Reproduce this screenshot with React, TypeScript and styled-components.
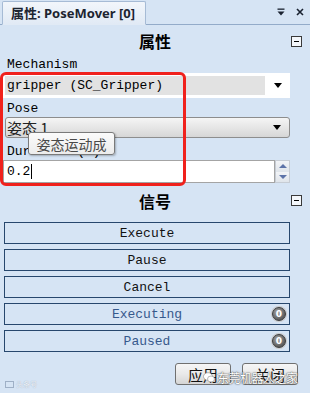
import React from 'react'
import styled, { createGlobalStyle } from 'styled-components'

const GlobalStyle = createGlobalStyle`
    html, body {
        margin: 0;
        padding: 0;
        background: #d6e4f4;
    }
    body {
        font-family: "Liberation Mono", "Noto Sans CJK SC", monospace;
    }
`

const Page = styled.div`
    position: relative;
    width: 310px;
    height: 393px;
    overflow: hidden;
    background: #d6e4f4;
`

const TabStrip = styled.div`
    display: flex;
    align-items: flex-end;
    justify-content: space-between;
    height: 24px;
    border-bottom: 1px solid #93abc9;
    padding-left: 2px;
`

const Tab = styled.div`
    display: flex;
    align-items: center;
    height: 21px;
    width: 134px;
    margin-bottom: -1px;
    padding: 0 0 1px 8px;
    background: linear-gradient(#f2f6fb, #e1eaf5);
    border: 1px solid #a6bbd5;
    border-bottom: 1px solid #e1eaf5;
    border-radius: 2px 2px 0 0;
    font-family: "Noto Sans", "Noto Sans CJK SC", sans-serif;
    font-weight: bold;
    font-size: 13px;
    color: #1c2430;
    white-space: nowrap;
`

const StripTools = styled.div`
    display: flex;
    align-items: center;
    gap: 11px;
    height: 24px;
    padding-right: 6px;
`

const Body = styled.div`
    padding: 0 20px 0 4px;
`

const SectionHead = styled.div<{ $h: number }>`
    display: grid;
    grid-template-columns: 1fr auto 1fr;
    align-items: center;
    height: ${({ $h }) => $h}px;
    margin: 0 -20px 0 -4px;
    font-family: "Noto Sans CJK SC", sans-serif;
    font-weight: bold;
    font-size: 16px;
    color: #000;
    span {
        grid-column: 2;
    }
`

const Collapse = styled.div`
    grid-column: 3;
    justify-self: end;
    margin-right: 8px;
    width: 9px;
    height: 9px;
    border: 1px solid #3a3a3a;
    background: #f4f7fb;
    position: relative;
    &:after {
        content: '';
        position: absolute;
        left: 2px;
        right: 2px;
        top: 4px;
        height: 1px;
        background: #000;
    }
`

const Group = styled.div`
    position: relative;
`

const Label = styled.div<{ $top?: number }>`
    height: 16px;
    line-height: 16px;
    margin-top: ${({ $top }) => $top || 0}px;
    padding-left: 3px;
    font-size: 13px;
    color: #000;
    white-space: nowrap;
`

const Combo = styled.div`
    display: flex;
    align-items: center;
    height: 25px;
    margin-left: -1px;
    background: #fff;
    box-sizing: border-box;
    padding: 3px 0 3px 2px;
`

const ComboValue = styled.div`
    flex: 1;
    height: 100%;
    display: flex;
    align-items: center;
    padding-left: 2px;
    background: #e2e2e2;
    font-size: 13px;
    color: #000;
`

const Arrow = styled.div`
    width: 25px;
    display: flex;
    justify-content: center;
    align-items: center;
    &:before {
        content: '';
        border-left: 4.5px solid transparent;
        border-right: 4.5px solid transparent;
        border-top: 5px solid #000;
    }
`

const Select = styled.div`
    display: flex;
    align-items: center;
    height: 21px;
    margin-left: 1px;
    box-sizing: border-box;
    border: 1px solid #8d8d8d;
    border-radius: 3px;
    background: linear-gradient(#f5f5f5, #e6e6e6 50%, #d6d6d6);
`

const SelectValue = styled.div`
    flex: 1;
    padding-left: 1px;
    font-family: "Noto Sans CJK SC", sans-serif;
    font-size: 15px;
    line-height: 19px;
    color: #222;
    white-space: nowrap;
`

const Tip = styled.div`
    position: absolute;
    left: 24px;
    top: 75px;
    height: 23px;
    width: 87px;
    box-sizing: border-box;
    display: flex;
    align-items: center;
    justify-content: center;
    border: 1px solid #7a7a7a;
    border-radius: 3px;
    background: linear-gradient(#fbfbfb, #ececec);
    box-shadow: 1px 1px 2px rgba(0, 0, 0, 0.25);
    font-family: "Noto Sans CJK SC", sans-serif;
    font-size: 14px;
    color: #4a4a4a;
    z-index: 2;
`

const SpinRow = styled.div`
    display: flex;
    height: 23px;
    margin-left: -1px;
`

const SpinInput = styled.div`
    flex: 1;
    display: flex;
    align-items: center;
    padding-left: 3px;
    background: #fff;
    border: 1px solid #a4a4a4;
    box-sizing: border-box;
    font-size: 13px;
    color: #000;
`

const Caret = styled.span`
    display: inline-block;
    width: 1px;
    height: 15px;
    margin-left: 1px;
    background: #000;
`

const SpinButtons = styled.div`
    display: flex;
    flex-direction: column;
    width: 15px;
    border: 1px solid #c6ccd4;
    box-sizing: border-box;
    background: #e4e9ef;
`

const SpinBtn = styled.div<{ $up?: boolean }>`
    flex: 1;
    display: flex;
    align-items: center;
    justify-content: center;
    background: linear-gradient(#f2f4f7, #dfe4ea);
    &:before {
        content: '';
        border-left: 4px solid transparent;
        border-right: 4px solid transparent;
        ${({ $up }) => $up ? 'border-bottom: 4px solid #5d73a8;' : 'border-top: 4px solid #5d73a8;'}
    }
`

const Annotation = styled.div`
    position: absolute;
    left: -4px;
    top: 15px;
    width: 186px;
    height: 114px;
    box-sizing: border-box;
    border: 3px solid #f0211c;
    border-radius: 6px;
    pointer-events: none;
    z-index: 3;
`

const SignalList = styled.div`
    display: flex;
    flex-direction: column;
    gap: 5px;
    margin-top: 4px;
`

const SignalButton = styled.div<{ $state?: boolean }>`
    position: relative;
    height: 22px;
    box-sizing: border-box;
    border: 1px solid #27476d;
    display: flex;
    align-items: center;
    justify-content: center;
    font-size: 13px;
    color: ${({ $state }) => $state ? '#36598c' : '#111'};
`

const Badge = styled.div`
    position: absolute;
    right: 3px;
    top: 3px;
    width: 14px;
    height: 14px;
    box-sizing: border-box;
    border-radius: 50%;
    border: 1px solid #3b3b3b;
    background: radial-gradient(circle at 40% 35%, #a8a8a8, #5d5d5d 70%);
    display: flex;
    align-items: center;
    justify-content: center;
    font-family: "DejaVu Sans", sans-serif;
    font-weight: bold;
    font-size: 9px;
    color: #fff;
    box-shadow: 0 0 0 1px #c9c9c9;
`

const Footer = styled.div`
    display: flex;
    justify-content: flex-end;
    gap: 11px;
    margin: 11px -8px 0 0;
`

const DlgButton = styled.div`
    width: 56px;
    height: 22px;
    box-sizing: border-box;
    border: 1px solid #707070;
    border-radius: 3px;
    background: linear-gradient(#f6f6f6, #e9e9e9 50%, #d5d5d5);
    display: flex;
    align-items: center;
    justify-content: center;
    font-family: "Noto Sans CJK SC", sans-serif;
    font-size: 15px;
    color: #111;
`

const Watermark = styled.div`
    position: absolute;
    left: 203px;
    top: 369px;
    display: flex;
    align-items: center;
    gap: 2px;
    font-family: "Noto Sans CJK SC", sans-serif;
    font-size: 12px;
    letter-spacing: -0.5px;
    color: #fff;
    text-shadow: 0 0 2px #555, 0 0 1px #333;
    z-index: 4;
`

const CornerMark = styled.div`
    position: absolute;
    left: 5px;
    top: 379px;
    display: flex;
    align-items: center;
    gap: 2px;
    font-family: "Noto Sans CJK SC", sans-serif;
    font-size: 7px;
    color: #eef3f9;
    text-shadow: 0 0 1px #8c9bb0;
`

const App: React.FC = () => {
    return (
        <Page>
            <GlobalStyle />
            <TabStrip>
                <Tab>属性: PoseMover [0]</Tab>
                <StripTools>
                    <svg width="8" height="8" viewBox="0 0 8 8">
                        <rect x="0.5" y="0.5" width="7" height="1.3" fill="#1a2230" />
                        <path d="M0.5 3.5 L7.5 3.5 L4 7.5 Z" fill="#1a2230" />
                    </svg>
                    <svg width="8" height="8" viewBox="0 0 8 8">
                        <path d="M1 1 L7 7 M7 1 L1 7" stroke="#1a2230" strokeWidth="1.6" />
                    </svg>
                </StripTools>
            </TabStrip>
            <Body>
                <SectionHead $h={32}>
                    <span>属性</span>
                    <Collapse />
                </SectionHead>
                <Group>
                    <Label>Mechanism</Label>
                    <Combo>
                        <ComboValue>gripper (SC_Gripper)</ComboValue>
                        <Arrow />
                    </Combo>
                    <Label $top={3}>Pose</Label>
                    <Select>
                        <SelectValue>姿态 1</SelectValue>
                        <Arrow />
                    </Select>
                    <Label $top={6}>Duration (s)</Label>
                    <SpinRow>
                        <SpinInput>0.2<Caret /></SpinInput>
                        <SpinButtons>
                            <SpinBtn $up />
                            <SpinBtn />
                        </SpinButtons>
                    </SpinRow>
                    <Tip>姿态运动成</Tip>
                    <Annotation />
                </Group>
                <SectionHead $h={35}>
                    <span>信号</span>
                    <Collapse />
                </SectionHead>
                <SignalList>
                    <SignalButton>Execute</SignalButton>
                    <SignalButton>Pause</SignalButton>
                    <SignalButton>Cancel</SignalButton>
                    <SignalButton $state>Executing<Badge>0</Badge></SignalButton>
                    <SignalButton $state>Paused<Badge>0</Badge></SignalButton>
                </SignalList>
                <Footer>
                    <DlgButton>应用</DlgButton>
                    <DlgButton>关闭</DlgButton>
                </Footer>
            </Body>
            <Watermark>
                <svg width="12" height="11" viewBox="0 0 12 11">
                    <ellipse cx="5" cy="4.5" rx="4.5" ry="3.8" fill="#fff" stroke="#888" strokeWidth="0.6" />
                    <ellipse cx="8" cy="7" rx="3.5" ry="3" fill="#fff" stroke="#888" strokeWidth="0.6" />
                </svg>
                东莞机器人之家
            </Watermark>
            <CornerMark>
                <svg width="9" height="7" viewBox="0 0 9 7">
                    <rect x="0.5" y="0.5" width="8" height="6" fill="none" stroke="#9fb0c6" strokeWidth="1" />
                </svg>
                头条号
            </CornerMark>
        </Page>
    )
}

export default App
